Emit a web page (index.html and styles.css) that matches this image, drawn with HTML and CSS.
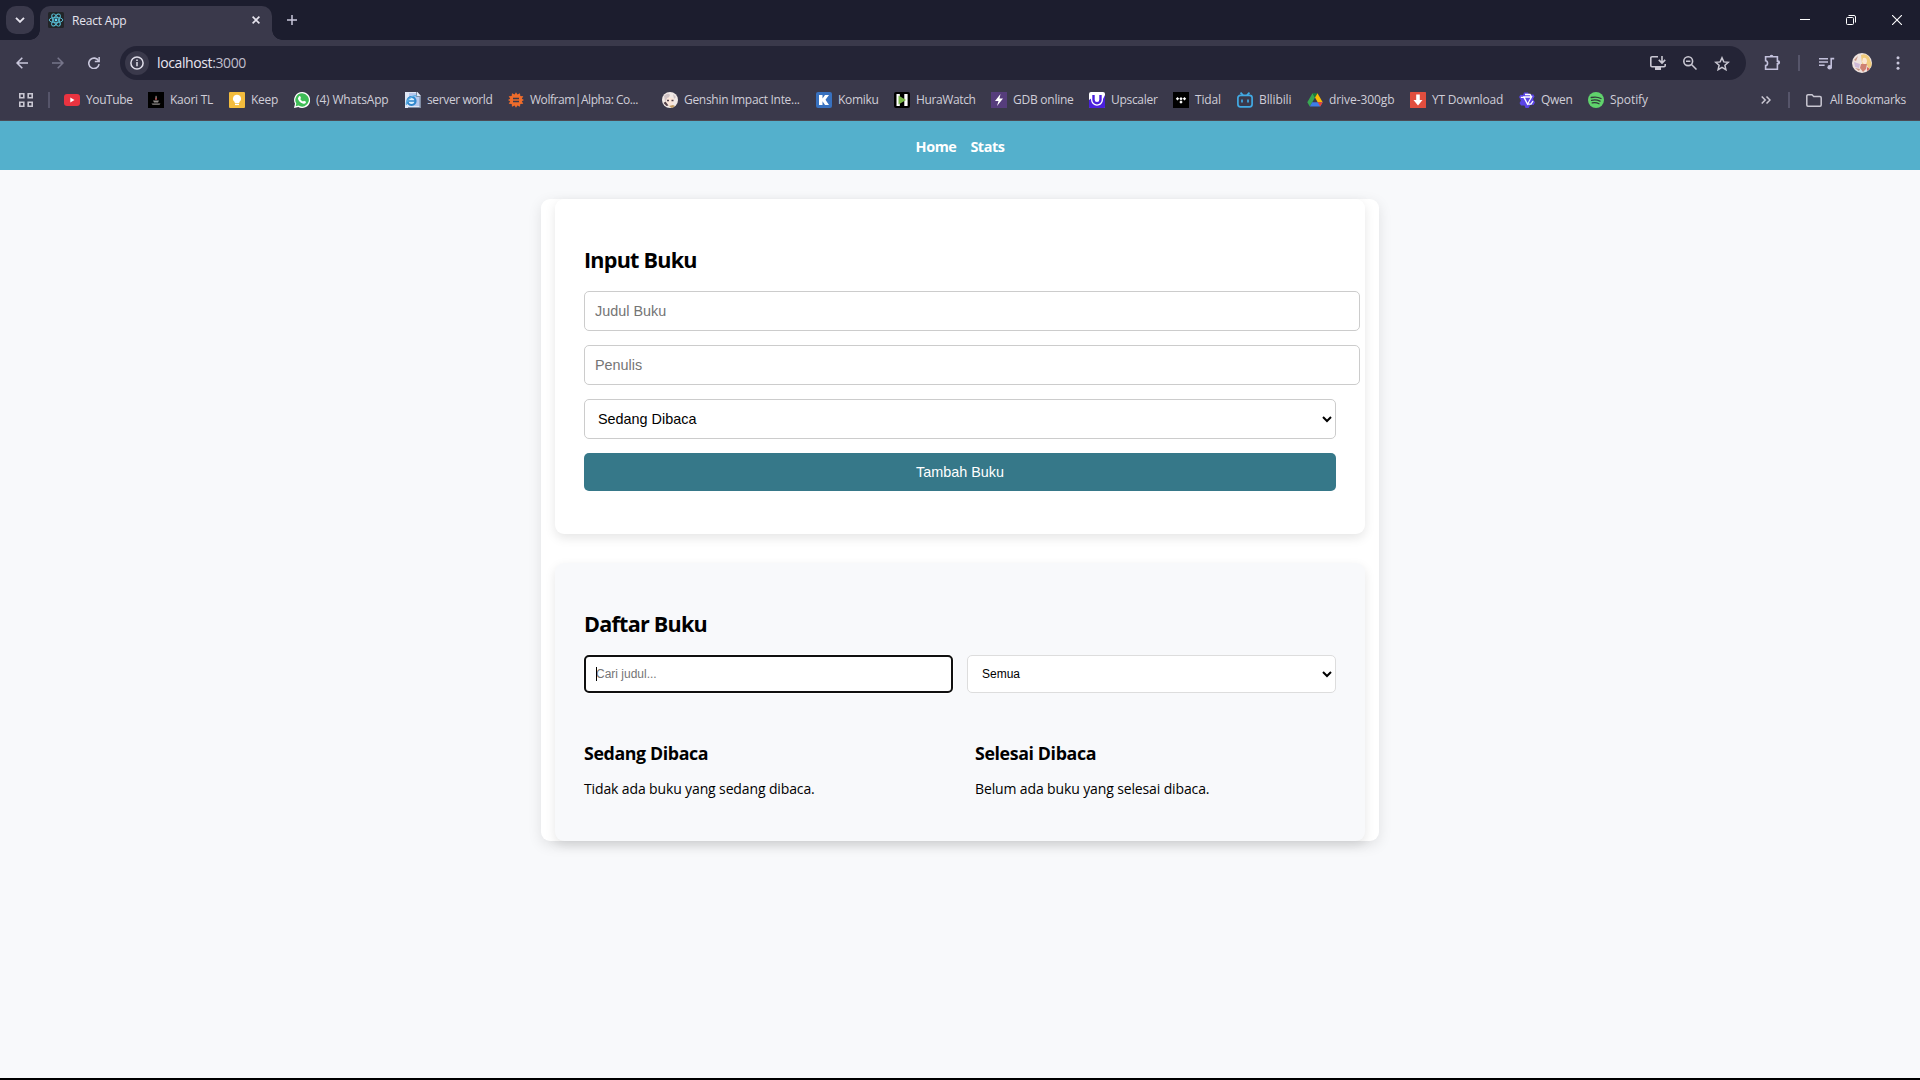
FILE: index.html
```html
<!DOCTYPE html>
<html lang="id">
<head>
<meta charset="utf-8">
<title>React App</title>
<link rel="stylesheet" href="styles.css">
</head>
<body>
<div class="browser">
  <header class="tabstrip">
    <button class="tab-search"><svg width="10" height="6" viewBox="0 0 10 6"><path d="M1 .8l4 4 4-4" fill="none" stroke="#e6e4ee" stroke-width="1.9"/></svg></button>
    <div class="tab">
      <svg class="tab-icon" width="16" height="16" viewBox="0 0 16 16"><rect width="16" height="16" rx="1.5" fill="#222528"/><g fill="none" stroke="#58bfd6" stroke-width=".95"><ellipse cx="8" cy="8" rx="6.8" ry="2.7"/><ellipse cx="8" cy="8" rx="6.8" ry="2.7" transform="rotate(60 8 8)"/><ellipse cx="8" cy="8" rx="6.8" ry="2.7" transform="rotate(120 8 8)"/></g><circle cx="8" cy="8" r="1.4" fill="#61dafb"/></svg>
      <span class="tab-title">React App</span>
      <svg class="tab-close" width="8" height="8" viewBox="0 0 8 8"><path d="M.6.6l6.8 6.8M7.4.6L.6 7.4" stroke="#e6e4ee" stroke-width="1.6"/></svg>
    </div>
    <svg class="new-tab" width="10" height="10" viewBox="0 0 10 10"><path d="M5 0v10M0 5h10" stroke="#c9c7dc" stroke-width="1.5"/></svg>
    <div class="window-controls">
      <svg width="10" height="10" viewBox="0 0 10 10"><path d="M0 4.5h10" stroke="#fff"/></svg>
      <svg width="10" height="10" viewBox="0 0 10 10"><rect x=".5" y="2.5" width="7" height="7" rx="1" fill="none" stroke="#fff"/><path d="M2.5.5H8A1.5 1.5 0 0 1 9.5 2v5.5" fill="none" stroke="#fff"/></svg>
      <svg width="10" height="10" viewBox="0 0 10 10"><path d="M0 0l10 10M10 0L0 10" stroke="#fff" stroke-width="1.1"/></svg>
    </div>
  </header>

  <div class="toolbar">
    <svg class="nav-icon" width="12" height="12" viewBox="0 0 12 12"><path d="M12 6H1.2M6.3.8L1.1 6l5.2 5.2" fill="none" stroke="#c9c7dc" stroke-width="1.6"/></svg>
    <svg class="nav-icon" width="12" height="12" viewBox="0 0 12 12"><path d="M0 6h10.8M5.7.8L10.9 6l-5.2 5.2" fill="none" stroke="#76758a" stroke-width="1.6"/></svg>
    <svg class="nav-icon" width="12" height="12" viewBox="0 0 12 12"><path d="M10.6 3.9A5.2 5.2 0 1 0 11.1 7.2" fill="none" stroke="#c9c7dc" stroke-width="1.6"/><path d="M11.9 0v5.2H6.8V3.7h3.6V0z" fill="#c9c7dc"/></svg>
    <div class="omnibox">
      <span class="site-info"><svg width="14" height="14" viewBox="0 0 14 14"><circle cx="7" cy="7" r="6.1" fill="none" stroke="#e0deea" stroke-width="1.5"/><path d="M7 6v4.3M7 3.6v1.5" stroke="#e0deea" stroke-width="1.5"/></svg></span>
      <span class="url">localhost<i>:3000</i></span>
      <div class="omnibox-actions">
        <svg width="16" height="14" viewBox="0 0 16 14"><path d="M8 .8H2A1.2 1.2 0 0 0 .8 2v7.5a1.2 1.2 0 0 0 1.2 1.2h12a1.2 1.2 0 0 0 1.2-1.2V8" fill="none" stroke="#c9c7d2" stroke-width="1.6"/><path d="M5 11h6v3H5z" fill="#c9c7d2"/><path d="M12 0v6.5M8.8 3.9L12 7.1l3.2-3.2" fill="none" stroke="#c9c7d2" stroke-width="1.6"/></svg>
        <svg width="14" height="14" viewBox="0 0 14 14"><circle cx="5.2" cy="5.2" r="4.4" fill="none" stroke="#c9c7d2" stroke-width="1.6"/><path d="M8.5 8.5l5 5M3 5.2h4.4" stroke="#c9c7d2" stroke-width="1.5"/></svg>
        <svg width="16" height="15" viewBox="0 0 16 15"><path d="M8 1.8l1.8 4.1 4.5.4-3.4 3 1 4.4L8 11.4l-3.9 2.3 1-4.4-3.4-3 4.5-.4z" fill="none" stroke="#c9c7d2" stroke-width="1.5"/></svg>
      </div>
    </div>
    <div class="toolbar-actions">
      <svg class="ext" width="17" height="17" viewBox="0 0 17 17"><path d="M1.6 2.8h11.8v4.3h.5a1.4 1.4 0 0 1 0 2.8h-.5v5.3H1.6v-3.6c2.6-.2 2.6-4.6 0-4.8z" fill="none" stroke="#c3c1dc" stroke-width="1.6"/><path d="M5.6 2.6a1.9 1.9 0 0 1 3.8 0zM13.6 6.6a1.9 1.9 0 0 1 0 3.8z" fill="#c3c1dc"/></svg>
      <span class="divider"></span>
      <svg class="queue" width="16" height="13" viewBox="0 0 16 13"><path d="M0 1.8h9M0 5h9M0 8.2h5.6" stroke="#c3c1dc" stroke-width="1.6"/><path d="M15.2 1.6h-3v8.2" fill="none" stroke="#c3c1dc" stroke-width="1.6"/><circle cx="10.7" cy="10.2" r="2.3" fill="#c3c1dc"/></svg>
      <svg class="avatar" width="20" height="20" viewBox="0 0 20 20"><clipPath id="av"><circle cx="10" cy="10" r="10"/></clipPath><g clip-path="url(#av)"><rect width="20" height="20" fill="#eee2dd"/><path d="M9 2q5-2 8 2l3 8-3 4-3-6-4 1z" fill="#f0cb7c"/><path d="M11 5q4-1 4 4l-2 3-3-3z" fill="#fbe6d2"/><path d="M9 11l6 0-1 5-3 3-3-4z" fill="#cf8272"/><path d="M2 9l6 2-1 4-4-1z" fill="#cdb9d6"/><path d="M6 3l-4 4 2 1zM3 15l4 3 1-2z" fill="#c79480"/><path d="M15 14l3 2-3 2z" fill="#d8675d"/></g></svg>
      <svg class="dots" width="4" height="14" viewBox="0 0 4 14" fill="#c9c7dc"><circle cx="2" cy="1.7" r="1.5"/><circle cx="2" cy="7" r="1.5"/><circle cx="2" cy="12.3" r="1.5"/></svg>
    </div>
  </div>

  <nav class="bookmarks">
    <svg class="apps" width="14" height="14" viewBox="0 0 14 14" fill="none" stroke="#c9c7d2" stroke-width="1.6"><path d="M.8.8h4v4h-4zM9.2.8h4v4h-4zM.8 9.2h4v4h-4zM9.2 9.2h4v4h-4z"/></svg>
    <span class="divider"></span>
    <div class="bm-list">
      <a class="bm bm-youtube"><svg viewBox="0 0 16 16"><rect y="2" width="16" height="12" rx="3" fill="#ea3340"/><path d="M6.3 5.5v5l4.2-2.5z" fill="#fff"/></svg><span>YouTube</span></a>
      <a class="bm bm-kaori"><svg viewBox="0 0 16 16"><rect width="16" height="16" fill="#000"/><path d="M8 3.500c1.500 1.500.4 2.500.4 4H7.500C7.700 6 6.900 5 8 3.500z" fill="#9c928e"/><path d="M5 8.500h6l-1 2H6zM3.500 11.500h9l-1 1.300h-7z" fill="#8f8b89"/><path d="M7.500 6h1v2h-1z" fill="#e55"/></svg><span>Kaori TL</span></a>
      <a class="bm bm-keep"><svg viewBox="0 0 16 16"><rect width="16" height="16" rx="1" fill="#f3bc3d"/><path d="M8 2.700a4 4 0 0 0-2.300 7.300v1h4.600v-1A4 4 0 0 0 8 2.700z" fill="#fff"/><path d="M6 11.700h4v1.400H6z" fill="#fff"/></svg><span>Keep</span></a>
      <a class="bm bm-whatsapp"><svg viewBox="0 0 16 16"><path d="M8 0a8 8 0 0 0-7 11.800L0 16l4.300-1A8 8 0 1 0 8 0z" fill="#fff"/><path d="M8 1.300a6.700 6.700 0 0 0-5.700 10.200l-.6 2.800 2.800-.7A6.700 6.700 0 1 0 8 1.300z" fill="#3fbd57"/><path d="M5 4.200l1.100-.2.900 2-.7 1c.5 1.200 1.400 2 2.700 2.600l1-.9 2 1-.2 1c-.5 1-1.800 1.200-3 .8-2.700-.9-4.500-2.800-4.900-5z" fill="#fff"/></svg><span>(4) WhatsApp</span></a>
      <a class="bm bm-server"><svg viewBox="0 0 16 16"><path d="M0 0h12.500L16 4v12H0z" fill="#dfe7f5"/><path d="M4 1h8v3h3v10H4z" fill="#b5c8ee"/><path d="M12 0v4h4v12H3v-1h11.500V5H11V0z" fill="#7f8ca3"/><circle cx="6.500" cy="9" r="4" fill="#d9efff" stroke="#2e86cc" stroke-width="2.200"/><path d="M3.500 9h7" stroke="#2e86cc" stroke-width="1.500"/><path d="M1.500 13C0 9 8 2 12 4" fill="none" stroke="#5aaee4" stroke-width="1.200"/></svg><span>server world</span></a>
      <a class="bm bm-wolfram"><svg viewBox="0 0 16 16"><path d="M8 .2l1.400 2.300L12 1.200l.3 2.700 3 .300-1.500 2.500L16 8l-2.200 1.300 1.500 2.500-3 .300-.3 2.700-2.600-1.300L8 15.800l-1.400-2.300L4 14.800l-.3-2.700-3-.300 1.500-2.500L0 8l2.200-1.300L.700 4.200l3-.300L4 1.200l2.600 1.300z" fill="#ee6c2b"/><path d="M5 6.500h6M5 9.500h6" stroke="#3a394a" stroke-width="1.500"/></svg><span>Wolfram|Alpha: Co...</span></a>
      <a class="bm bm-genshin"><svg viewBox="0 0 16 16"><circle cx="8" cy="8" r="8" fill="#f1e9e6"/><path d="M2 4q4-4 6-1L6 7 3 9zM11 2l3 3-2 2z" fill="#cfc2c4"/><path d="M5 6q4-2 7 1l-1 5-4 2-3-4z" fill="#fbe6da"/><path d="M5 8.500h2M9.500 8.500h2" stroke="#4c3e49" stroke-width="1.600"/><path d="M1.500 11l3 3 2-.500-3-4z" fill="#55424a"/><path d="M7 14l4-1 2 1-3 2z" fill="#c09a60"/></svg><span>Genshin Impact Inte...</span></a>
      <a class="bm bm-komiku"><svg viewBox="0 0 16 16"><rect width="16" height="16" rx="2" fill="#3871bf"/><path d="M3 3h3.500v3.500L9 3h4l-3.500 4.800L13 13H9L6.500 9.300V13H3z" fill="#fff"/></svg><span>Komiku</span></a>
      <a class="bm bm-hura"><svg viewBox="0 0 16 16"><rect width="16" height="16" rx="2" fill="#000"/><path d="M2.500 2h3.300v12H2.500zM10.300 2h3.300v12h-3.300z" fill="#fff"/><path d="M4.500 3.500L12 8l-7.500 4.500z" fill="#7ab648"/></svg><span>HuraWatch</span></a>
      <a class="bm bm-gdb"><svg viewBox="0 0 16 16"><rect width="16" height="16" fill="#563d7c"/><path d="M9.500 2L4 9h3.500L6 14l6-7.500H8.500z" fill="#fff"/></svg><span>GDB online</span></a>
      <a class="bm bm-upscaler"><svg viewBox="0 0 16 16"><rect width="16" height="16" rx="2" fill="#fff"/><path d="M0 8l3-2v4l4 3h4l5-10v12a1 1 0 0 1-1 1H1a1 1 0 0 1-1-1z" fill="#4a20dd"/><path d="M4.500 3v4.800a3.500 3.500 0 0 0 7 0V3" fill="none" stroke="#fff" stroke-width="5"/><path d="M4.500 3v4.800a3.500 3.500 0 0 0 7 0V3" fill="none" stroke="#4a20dd" stroke-width="2.400"/></svg><span>Upscaler</span></a>
      <a class="bm bm-tidal"><svg viewBox="0 0 16 16"><rect width="16" height="16" fill="#000"/><path d="M4.500 5l1.700 1.700-1.700 1.700-1.700-1.700zM8 5l1.700 1.700L8 8.400 6.300 6.700zM11.500 5l1.700 1.700-1.700 1.700-1.700-1.700zM8 8.400l1.700 1.700L8 11.800l-1.700-1.700z" fill="#fff"/></svg><span>Tidal</span></a>
      <a class="bm bm-bili"><svg viewBox="0 0 16 16" fill="none" stroke="#42aae4" stroke-width="1.700"><rect x=".9" y="3.300" width="14.200" height="11.500" rx="2.500"/><path d="M3.500.700L6 3.200M12.500.700L10 3.200M5 7.500v3M11 7.500v3"/></svg><span>Bllibili</span></a>
      <a class="bm bm-drive"><svg viewBox="0 0 16 16"><path d="M5.500 1.200L8 5.500 2.800 14.500.3 10.200z" fill="#38a852"/><path d="M5.500 1.200h5L8 5.500z" fill="#188038"/><path d="M10.500 1.200l5.200 9h-5L8 5.500z" fill="#fbbc04"/><path d="M5.200 10.200h10.500l-2.500 4.300H2.800z" fill="#3f7de8"/><path d="M10.700 10.200h5l-2.500 4.300z" fill="#ea4335"/></svg><span>drive-300gb</span></a>
      <a class="bm bm-ytd"><svg viewBox="0 0 16 16"><rect width="16" height="16" rx=".5" fill="#e14e3e"/><path d="M6.200 2.500h3.600V8h2.700L8 13.500 3.500 8h2.700z" fill="#fff"/></svg><span>YT Download</span></a>
      <a class="bm bm-qwen"><svg viewBox="0 0 16 16"><path d="M5 .500h4l1 2h4.500l1 2L14 7l2 3.500-1.500 2.500-3-.300L9.500 16H6.500l-1-2.500H2L.500 11 2 8.500 0 5l1.500-2.300L4 3z" fill="#5a45e6"/><path d="M5 5h7.500L8.500 12.200zM1.800 5.300h3l3.700 6.900M12.500 5l-1.500-2.500H6M8.500 12.200h3.500L14 9" fill="none" stroke="#fff" stroke-width="1.300"/></svg><span>Qwen</span></a>
      <a class="bm bm-spotify"><svg viewBox="0 0 16 16"><circle cx="8" cy="8" r="8" fill="#60d36c"/><path d="M3.200 5.500q5.500-1.300 9.800 1M3.600 8.300q4.500-1.100 8.400.9M4.200 10.900q3.800-.8 6.800.8" fill="none" stroke="#303b3b" stroke-width="1.300" stroke-linecap="round"/></svg><span>Spotify</span></a>
    </div>
    <div class="bm-end">
      <svg class="more" width="10" height="8" viewBox="0 0 10 8"><path d="M.7.5L4.200 4 .7 7.500M5.500.5L9 4 5.500 7.500" fill="none" stroke="#c9c7d2" stroke-width="1.500"/></svg>
      <span class="divider"></span>
      <svg class="folder" width="16" height="13" viewBox="0 0 16 13"><path d="M.8 2A1.200 1.200 0 0 1 2 .8h4l1.700 1.700H14a1.200 1.200 0 0 1 1.200 1.200V11a1.200 1.200 0 0 1-1.200 1.200H2A1.200 1.200 0 0 1 .8 11z" fill="none" stroke="#c9c7d2" stroke-width="1.500"/></svg>
      <span class="all">All Bookmarks</span>
    </div>
  </nav>
</div>

<div class="site-nav"><a>Home</a><a>Stats</a></div>

<main class="container">
  <section class="card">
    <h2>Input Buku</h2>
    <div class="form">
      <input class="field" type="text" placeholder="Judul Buku">
      <input class="field" type="text" placeholder="Penulis">
      <select class="select"><option>Sedang Dibaca</option></select>
      <button class="submit">Tambah Buku</button>
    </div>
  </section>
  <section class="card list">
    <h2>Daftar Buku</h2>
    <div class="filters">
      <div class="search-wrap"><input class="search" type="text" placeholder="Cari judul..."></div>
      <select class="select small"><option>Semua</option></select>
    </div>
    <div class="columns">
      <div><h3>Sedang Dibaca</h3><p>Tidak ada buku yang sedang dibaca.</p></div>
      <div><h3>Selesai Dibaca</h3><p>Belum ada buku yang selesai dibaca.</p></div>
    </div>
  </section>
</main>
<div class="page-edge"></div>
</body>
</html>
```
FILE: styles.css
```css
* { box-sizing: border-box; }
html, body { height: 100%; }
body {
  margin: 0;
  display: flex;
  flex-direction: column;
  overflow: hidden;
  background: #f8f9fb;
  color: #000;
  font-family: "Open Sans", "Noto Sans", sans-serif;
}
svg { display: block; flex: none; }
button { border: 0; padding: 0; }

/* Browser window */
.browser {
  flex: none;
  height: 121px;
  background: #3a394b;
  border-bottom: 1px solid #4c4b55;
  font-size: 12px;
  color: #d0ced8;
  white-space: nowrap;
}
.tabstrip {
  height: 40px;
  display: flex;
  align-items: flex-start;
  background: #1c1d2e;
  padding: 6px 18px 0 6px;
}
.tab-search {
  width: 28px;
  height: 28px;
  border-radius: 10px;
  background: #3a394b;
  display: flex;
  align-items: center;
  justify-content: center;
}
.tab {
  position: relative;
  width: 232px;
  height: 34px;
  margin-left: 6px;
  padding: 0 12px 6px 8px;
  display: flex;
  align-items: center;
  border-radius: 10px 10px 0 0;
  background: #3a394b;
  color: #e6e4ee;
}
.tab::before, .tab::after {
  content: "";
  position: absolute;
  bottom: 0;
  width: 10px;
  height: 10px;
}
.tab::before { left: -10px; background: radial-gradient(circle at 0 0, transparent 9.5px, #3a394b 10px); }
.tab::after { right: -10px; background: radial-gradient(circle at 100% 0, transparent 9.5px, #3a394b 10px); }
.tab-title { flex: 1; margin-left: 8px; letter-spacing: -.2px; }
.new-tab { margin: 9px 0 0 15px; }
.window-controls { display: flex; gap: 36px; margin: 9px 0 0 auto; }

.toolbar { height: 46px; display: flex; align-items: center; padding-left: 16px; }
.nav-icon { margin-right: 24px; }
.omnibox {
  width: 1626px;
  height: 34px;
  margin-left: -4px;
  padding: 0 16px 0 5px;
  display: flex;
  align-items: center;
  border-radius: 17px;
  background: #242436;
}
.site-info {
  width: 24px;
  height: 24px;
  border-radius: 50%;
  background: #3a394b;
  display: flex;
  align-items: center;
  justify-content: center;
}
.url { margin-left: 8px; padding-bottom: 1px; font-size: 14px; letter-spacing: -.39px; color: #e8e6f0; }
.url i { font-style: normal; color: #c0becb; }
.omnibox-actions { margin-left: auto; display: flex; align-items: center; gap: 17px; }
.toolbar-actions { flex: 1; display: flex; align-items: center; }
.divider { flex: none; width: 2px; height: 16px; background: #56556a; }
.ext { margin: 0 17px 1px 18px; }
.queue { margin-left: 19px; }
.avatar { margin-left: 17px; }
.dots { margin-left: 24px; }

.bookmarks { height: 28px; display: flex; align-items: center; padding: 0 14px 0 19px; }
.apps { margin-right: 15px; }
.bm-list { display: flex; margin-left: 14px; }
.bm { flex: none; display: flex; align-items: center; gap: 6px; }
.bm svg { width: 16px; height: 16px; }
.bm span, .all { padding-bottom: 1px; }
.bm-youtube { width: 84px; letter-spacing: -.4px; }
.bm-kaori { width: 81px; letter-spacing: -.27px; }
.bm-keep { width: 65px; letter-spacing: -.3px; }
.bm-whatsapp { width: 111px; letter-spacing: -.16px; }
.bm-server { width: 103px; letter-spacing: -.37px; }
.bm-wolfram { width: 154px; letter-spacing: -.46px; }
.bm-genshin { width: 154px; letter-spacing: -.3px; }
.bm-komiku { width: 78px; letter-spacing: -.32px; }
.bm-hura { width: 97px; letter-spacing: -.38px; }
.bm-gdb { width: 98px; letter-spacing: -.25px; }
.bm-upscaler { width: 84px; letter-spacing: -.3px; }
.bm-tidal { width: 64px; letter-spacing: -.14px; }
.bm-bili { width: 70px; letter-spacing: -.1px; }
.bm-drive { width: 103px; letter-spacing: -.07px; }
.bm-ytd { width: 109px; letter-spacing: -.2px; }
.bm-qwen { width: 69px; letter-spacing: -.3px; }
.bm-spotify { letter-spacing: -.07px; }
.bm-end { margin-left: auto; display: flex; align-items: center; }
.all { width: 76px; letter-spacing: -.31px; }
.more { margin-right: 17px; }
.folder { margin: 0 8px 0 16px; }

/* Web page */
.site-nav {
  flex: none;
  height: 49px;
  padding-top: 1px;
  display: flex;
  align-items: center;
  justify-content: center;
  gap: 14px;
  background: #54b0cc;
  color: #fff;
  font-size: 14.4px;
  font-weight: 700;
  letter-spacing: -.45px;
}
.container {
  flex: none;
  width: 838px;
  margin: 29px auto 0;
  padding: 0 14px;
  border-radius: 9px;
  background: #fff;
  box-shadow: 0 4px 14px rgba(0, 0, 0, .1);
}
.card {
  height: 335px;
  padding: 47px 29px 0;
  border-radius: 9px;
  background: #fff;
  box-shadow: 0 4px 11px rgba(0, 0, 0, .1);
}
.card.list { height: 278px; margin-top: 29px; background: #f8f9fb; }
h2, h3, p { margin: 0; white-space: nowrap; }
h2 { font-size: 21.6px; line-height: 28px; letter-spacing: -.78px; }
.form { display: flex; flex-direction: column; align-items: flex-start; gap: 14px; margin-top: 17px; }
.field, .select, .search, .submit { font-family: "Liberation Sans", Arial, sans-serif; font-size: 14.4px; }
.field, .select, .search {
  border: 1px solid #ccc;
  border-radius: 5px;
  background: #fff;
  color: #000;
}
.field { width: 776px; height: 40px; padding: 0 10px; }
.field::placeholder, .search::placeholder { color: #757575; }
.select { width: 752px; height: 40px; padding: 0 0 0 9px; }
.submit {
  width: 752px;
  height: 38px;
  border-radius: 5px;
  background: #367889;
  color: #fff;
}
.filters { display: flex; gap: 14px; margin-top: 17px; }
.search-wrap { position: relative; width: 369px; height: 38px; }
.search-wrap::after {
  content: "";
  position: absolute;
  left: 12px;
  top: 12px;
  width: 1px;
  height: 14px;
  background: #000;
}
.search {
  width: 100%;
  height: 38px;
  padding: 0 10px;
  border: 2px solid #101010;
  box-shadow: 0 0 0 1px #fff;
  font-size: 12px;
}
.select.small { width: 369px; height: 38px; padding-left: 10px; border-color: #ddd; font-size: 12px; }
.columns { display: grid; grid-template-columns: 361px 361px; gap: 30px; margin-top: 47px; }
h3 { font-size: 17.8px; line-height: 26px; letter-spacing: -.38px; }
p { margin-top: 13px; font-size: 14px; line-height: 20px; letter-spacing: -.13px; }
.page-edge { flex: none; height: 2px; margin-top: auto; background: #000; }
```
